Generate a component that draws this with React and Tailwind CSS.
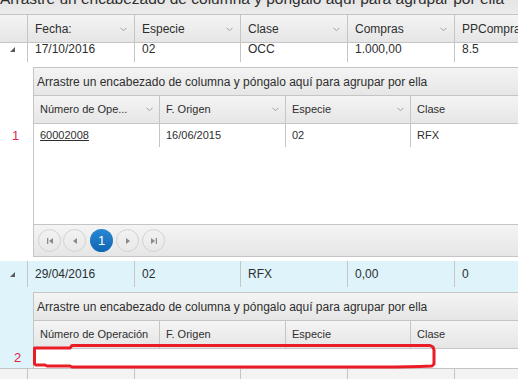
import React from "react";

const BORDER = "border-[#c5c5c5]";
const HEAD_BG = "bg-gradient-to-b from-[#f4f4f4] to-[#e6e6e6]";

function Chevron() {
  return (
    <svg width="7" height="5" viewBox="0 0 7 5" className="shrink-0">
      <polyline points="0.5,0.8 3.5,3.8 6.5,0.8" fill="none" stroke="#a3a3a3" strokeWidth="1" />
    </svg>
  );
}

function Collapse() {
  return (
    <svg width="5" height="5" viewBox="0 0 5 5">
      <polygon points="5,0 5,5 0,5" fill="#5a5a5a" />
    </svg>
  );
}

const MW = ["w-[107px]", "w-[106px]", "w-[107px]", "w-[107px]", "w-[130px]"];

function MasterHeader() {
  const cols = ["Fecha:", "Especie", "Clase", "Compras", "PPCompras"];
  return (
    <div className={`flex h-[28px] border-b ${BORDER} ${HEAD_BG}`}>
      <div className="w-[27px] shrink-0" />
      {cols.map((c, i) => (
        <div
          key={c}
          className={`${MW[i]} shrink-0 border-l ${BORDER} pl-[7px] pr-[7px] pt-[1px] flex items-center justify-between whitespace-nowrap overflow-hidden`}
        >
          <span>{c}</span>
          {i < 4 && <Chevron />}
        </div>
      ))}
    </div>
  );
}

function MasterRow({ cells, blue }) {
  return (
    <div className={`flex h-[26px] ${blue ? "bg-[#dff3fb]" : "bg-white"}`}>
      <div className="w-[27px] shrink-0 flex items-center pl-[10px]">
        <Collapse />
      </div>
      {cells.map((c, i) => (
        <div
          key={i}
          className={`${MW[i]} shrink-0 border-l ${BORDER} pl-[7px] flex items-center whitespace-nowrap`}
        >
          {c}
        </div>
      ))}
    </div>
  );
}

const DW = ["w-[125px]", "w-[126px]", "w-[125px]", "w-[160px]"];

function PagerBtn({ children }) {
  return (
    <div className="w-[23px] h-[23px] rounded-full border border-[#d2d2d2] flex items-center justify-center">
      {children}
    </div>
  );
}

function DetailGrid({ chevrons, headers, row, pager }) {
  return (
    <div className={`w-[560px] border-l border-t ${pager ? "border-b" : ""} ${BORDER} bg-white`}>
      <div className={`h-[28px] border-b ${BORDER} ${HEAD_BG} flex items-center pl-[3px] whitespace-nowrap text-[12px]`}>
        Arrastre un encabezado de columna y póngalo aquí para agrupar por ella
      </div>
      <div className={`flex h-[28px] border-b ${BORDER} ${HEAD_BG} text-[11px]`}>
        {headers.map((h, i) => (
          <div
            key={i}
            className={`${DW[i]} shrink-0 ${i > 0 ? `border-l ${BORDER}` : ""} pl-[6px] pr-[6px] flex items-center justify-between whitespace-nowrap`}
          >
            <span>{h}</span>
            {chevrons && i < 3 && <Chevron />}
          </div>
        ))}
      </div>
      {row ? (
        <div className="flex h-[23px] text-[11px]">
          {row.map((c, i) => (
            <div
              key={i}
              className={`${DW[i]} shrink-0 ${i > 0 ? `border-l ${BORDER}` : ""} pl-[6px] flex items-center whitespace-nowrap`}
            >
              {i === 0 ? <span className="underline">{c}</span> : c}
            </div>
          ))}
        </div>
      ) : (
        <div className="h-[21px]" />
      )}
      {pager && (
        <>
          <div className="h-[77px]" />
          <div className={`h-[32px] border-t ${BORDER} ${HEAD_BG} flex items-center pl-[4px]`}>
            <PagerBtn>
              <svg width="8" height="8" viewBox="0 0 8 8">
                <rect x="1" y="1" width="1.3" height="6" fill="#8a8a8a" />
                <polygon points="7,1 7,7 3,4" fill="#8a8a8a" />
              </svg>
            </PagerBtn>
            <div className="w-[2px]" />
            <PagerBtn>
              <svg width="8" height="8" viewBox="0 0 8 8">
                <polygon points="6,1 6,7 2,4" fill="#8a8a8a" />
              </svg>
            </PagerBtn>
            <div className="w-[4px]" />
            <div className="w-[23px] h-[23px] rounded-full bg-gradient-to-b from-[#2a87d3] to-[#0f66b3] text-white text-[13px] flex items-center justify-center">
              1
            </div>
            <div className="w-[3px]" />
            <PagerBtn>
              <svg width="8" height="8" viewBox="0 0 8 8">
                <polygon points="2,1 2,7 6,4" fill="#8a8a8a" />
              </svg>
            </PagerBtn>
            <div className="w-[3px]" />
            <PagerBtn>
              <svg width="8" height="8" viewBox="0 0 8 8">
                <polygon points="1,1 1,7 5,4" fill="#8a8a8a" />
                <rect x="5.7" y="1" width="1.3" height="6" fill="#8a8a8a" />
              </svg>
            </PagerBtn>
          </div>
        </>
      )}
    </div>
  );
}

export default function App() {
  return (
    <div className="w-[518px] h-[379px] overflow-hidden relative bg-white text-[#2e2e2e] text-[12px] font-['Liberation_Sans',Arial,sans-serif]">
      <div className={`h-[15px] border-b ${BORDER} bg-gradient-to-b from-[#e6e6e6] to-[#ececec] overflow-hidden whitespace-nowrap`}>
        <div className="mt-[-10.5px] leading-[18px] text-[15.5px]">
          Arrastre un encabezado de columna y póngalo aquí para agrupar por ella
        </div>
      </div>
      <MasterHeader />
      <div className="h-[325px] overflow-hidden">
        <div className="mt-[-7px]">
          <MasterRow cells={["17/10/2016", "02", "OCC", "1.000,00", "8.5"]} />
          <div className="flex bg-white">
            <div className="w-[27px] shrink-0" />
            <div className="pl-[6px] pt-[5px] pb-[4px]">
              <DetailGrid
                chevrons
                headers={["Número de Ope...", "F. Origen", "Especie", "Clase"]}
                row={["60002008", "16/06/2015", "02", "RFX"]}
                pager
              />
            </div>
          </div>
          <MasterRow blue cells={["29/04/2016", "02", "RFX", "0,00", "0"]} />
          <div className="flex bg-[#dff3fb]">
            <div className="w-[27px] shrink-0" />
            <div className="pl-[6px] pt-[5px]">
              <DetailGrid headers={["Número de Operación", "F. Origen", "Especie", "Clase"]} />
            </div>
          </div>
        </div>
      </div>
      <div className={`flex h-[26px] border-t ${BORDER} bg-[#f3f3f3]`}>
        <div className="w-[27px] shrink-0" />
        {["", "", "", "1.000,00", ""].map((c, i) => (
          <div key={i} className={`${MW[i]} shrink-0 border-l ${BORDER} pl-[7px] pt-[7px] whitespace-nowrap`}>
            {c}
          </div>
        ))}
      </div>

      {/* annotations */}
      <div className="absolute left-[12px] top-[126px] text-[13px] text-[#e3245a]">1</div>
      <div className="absolute left-[14px] top-[348px] text-[13px] text-[#e3243c]">2</div>
      <svg className="absolute left-0 top-0 pointer-events-none" width="518" height="379" viewBox="0 0 518 379">
        <path
          d="M34.5,364 L34.5,348 L70,348 L72,345.5 L430,345.5 L433,347 L434,350 L434,364 L432,366 L420,366.5 L396,367 L72,367 L70,366 L47,366 L45,365 L36,365 Z"
          fill="none"
          stroke="#ea1c26"
          strokeWidth="3"
          strokeLinejoin="round"
        />
      </svg>
    </div>
  );
}
